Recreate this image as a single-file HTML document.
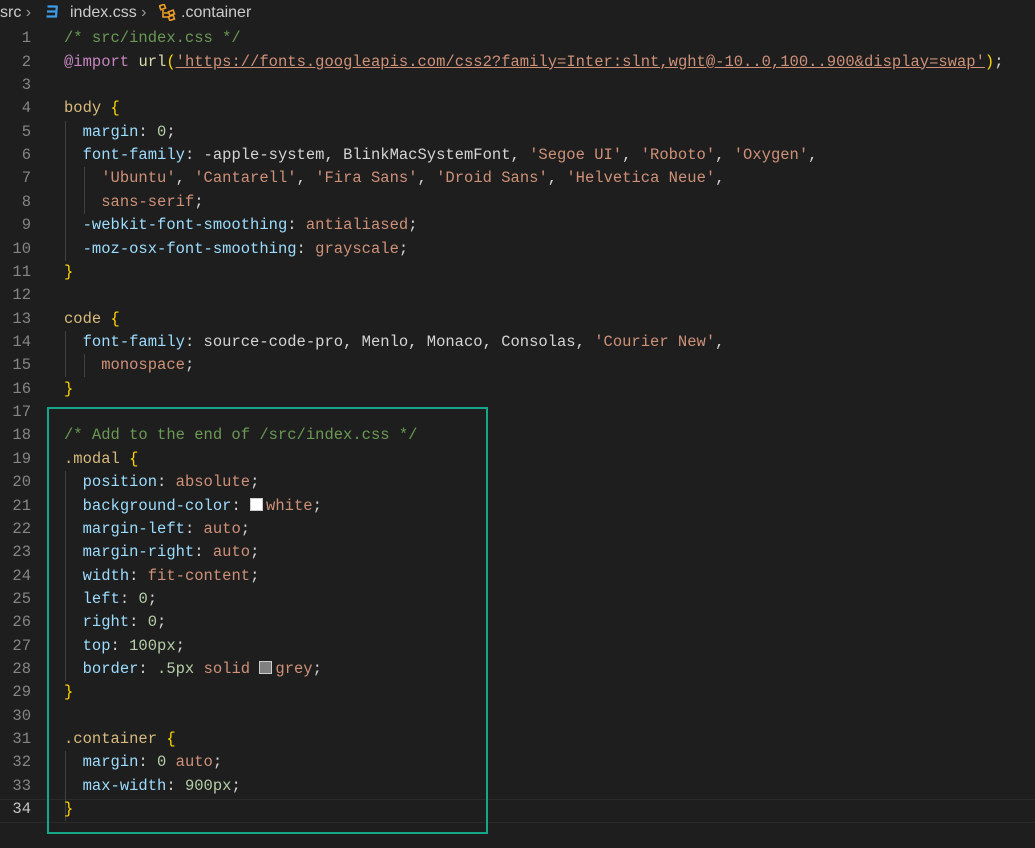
<!DOCTYPE html>
<html><head><meta charset="utf-8"><style>
body{margin:0;width:1035px;height:848px;background:#1e1e1e;overflow:hidden;position:relative;font-family:"Liberation Mono",monospace;font-size:15.5px}
.ln{position:absolute;left:0;width:31px;text-align:right;color:#858585;height:23.36px;line-height:23.36px}
.cd{position:absolute;left:64px;white-space:pre;color:#d4d4d4;height:23.36px;line-height:23.36px}
.c{color:#6a9955}.a{color:#c586c0}.f{color:#dcdcaa}.s{color:#ce9178}.sel{color:#d7ba7d}.b{color:#ffd700}.p{color:#9cdcfe}.n{color:#b5cea8}.pb{color:#da70d6}
.u{text-decoration:underline;text-decoration-color:#ce9178}
.g{position:absolute;width:1px;background:#404040}
.sw{display:inline-block;width:11px;height:11px;border:1px solid #ccc;vertical-align:-1px;margin-right:3px}
.bc{position:absolute;top:0;height:26px;line-height:26px;font-family:"Liberation Sans",sans-serif;font-size:16px;color:#cccccc;white-space:pre}
</style></head><body>
<div class="bc" style="left:0">src <span style="color:#999">›</span></div>
<svg style="position:absolute;left:44px;top:4px" width="16" height="16" viewBox="0 0 16 16"><path d="M3 2h11l-1.5 12L8 15.5 3.5 14" fill="none"/><path d="M3.5 2.5h10M3 7.5h10M2.5 12.5h9.5l.8-10" stroke="#3b9ce8" stroke-width="2.2" fill="none"/></svg>
<div class="bc" style="left:70px">index.css <span style="color:#999">›</span></div>
<svg style="position:absolute;left:159px;top:4px" width="18" height="17" viewBox="0 0 18 17"><g fill="none" stroke="#ee9d28" stroke-width="1.6"><rect x="1" y="1" width="5" height="4" transform="rotate(-20 3.5 3)"/><path d="M4 6v7h5M5 9h5"/><rect x="10" y="7" width="5" height="4" transform="rotate(-20 12 9)"/><rect x="10" y="12" width="5" height="4" transform="rotate(-20 12 14)"/></g></svg>
<div class="bc" style="left:181px">.container</div>
<div style="position:absolute;left:0;right:0;top:799px;height:22px;border-top:1px solid #2a2a2a;border-bottom:1px solid #2a2a2a"></div>
<div class="g" style="left:65px;top:121px;height:140px"></div>
<div class="g" style="left:84px;top:167px;height:47px"></div>
<div class="g" style="left:65px;top:331px;height:46px"></div>
<div class="g" style="left:84px;top:354px;height:23px"></div>
<div class="g" style="left:65px;top:471px;height:210px"></div>
<div class="g" style="left:65px;top:751px;height:70px"></div>
<div style="position:absolute;left:47px;top:407px;width:437px;height:423px;border:2px solid #16a68a"></div>
<div id="L"></div>
<script>
var L=[
'<span class="c">/* src/index.css */</span>',
'<span class="a">@import</span> <span class="f">url</span><span class="b">(</span><span class="s u">\'https://fonts.googleapis.com/css2?family=Inter:slnt,wght@-10..0,100..900&amp;display=swap\'</span><span class="b">)</span>;',
'',
'<span class="sel">body</span> <span class="b">{</span>',
'  <span class="p">margin</span>: <span class="n">0</span>;',
'  <span class="p">font-family</span>: -apple-system, BlinkMacSystemFont, <span class="s">\'Segoe UI\'</span>, <span class="s">\'Roboto\'</span>, <span class="s">\'Oxygen\'</span>,',
'    <span class="s">\'Ubuntu\'</span>, <span class="s">\'Cantarell\'</span>, <span class="s">\'Fira Sans\'</span>, <span class="s">\'Droid Sans\'</span>, <span class="s">\'Helvetica Neue\'</span>,',
'    <span class="s">sans-serif</span>;',
'  <span class="p">-webkit-font-smoothing</span>: <span class="s">antialiased</span>;',
'  <span class="p">-moz-osx-font-smoothing</span>: <span class="s">grayscale</span>;',
'<span class="b">}</span>',
'',
'<span class="sel">code</span> <span class="b">{</span>',
'  <span class="p">font-family</span>: source-code-pro, Menlo, Monaco, Consolas, <span class="s">\'Courier New\'</span>,',
'    <span class="s">monospace</span>;',
'<span class="b">}</span>',
'',
'<span class="c">/* Add to the end of /src/index.css */</span>',
'<span class="sel">.modal</span> <span class="b">{</span>',
'  <span class="p">position</span>: <span class="s">absolute</span>;',
'  <span class="p">background-color</span>: <span class="sw" style="background:#fff"></span><span class="s">white</span>;',
'  <span class="p">margin-left</span>: <span class="s">auto</span>;',
'  <span class="p">margin-right</span>: <span class="s">auto</span>;',
'  <span class="p">width</span>: <span class="s">fit-content</span>;',
'  <span class="p">left</span>: <span class="n">0</span>;',
'  <span class="p">right</span>: <span class="n">0</span>;',
'  <span class="p">top</span>: <span class="n">100px</span>;',
'  <span class="p">border</span>: <span class="n">.5px</span> <span class="s">solid</span> <span class="sw" style="background:#808080"></span><span class="s">grey</span>;',
'<span class="b">}</span>',
'',
'<span class="sel">.container</span> <span class="b">{</span>',
'  <span class="p">margin</span>: <span class="n">0</span> <span class="s">auto</span>;',
'  <span class="p">max-width</span>: <span class="n">900px</span>;',
'<span class="b">}</span>'];
var h='';
for(var i=0;i<L.length;i++){var t=(27.3+i*23.36).toFixed(2);
h+='<div class="ln" style="top:'+t+'px'+(i==33?';color:#c6c6c6':'')+'">'+(i+1)+'</div><div class="cd" style="top:'+t+'px">'+L[i]+'</div>';}
document.getElementById('L').innerHTML=h;
</script>
</body></html>
